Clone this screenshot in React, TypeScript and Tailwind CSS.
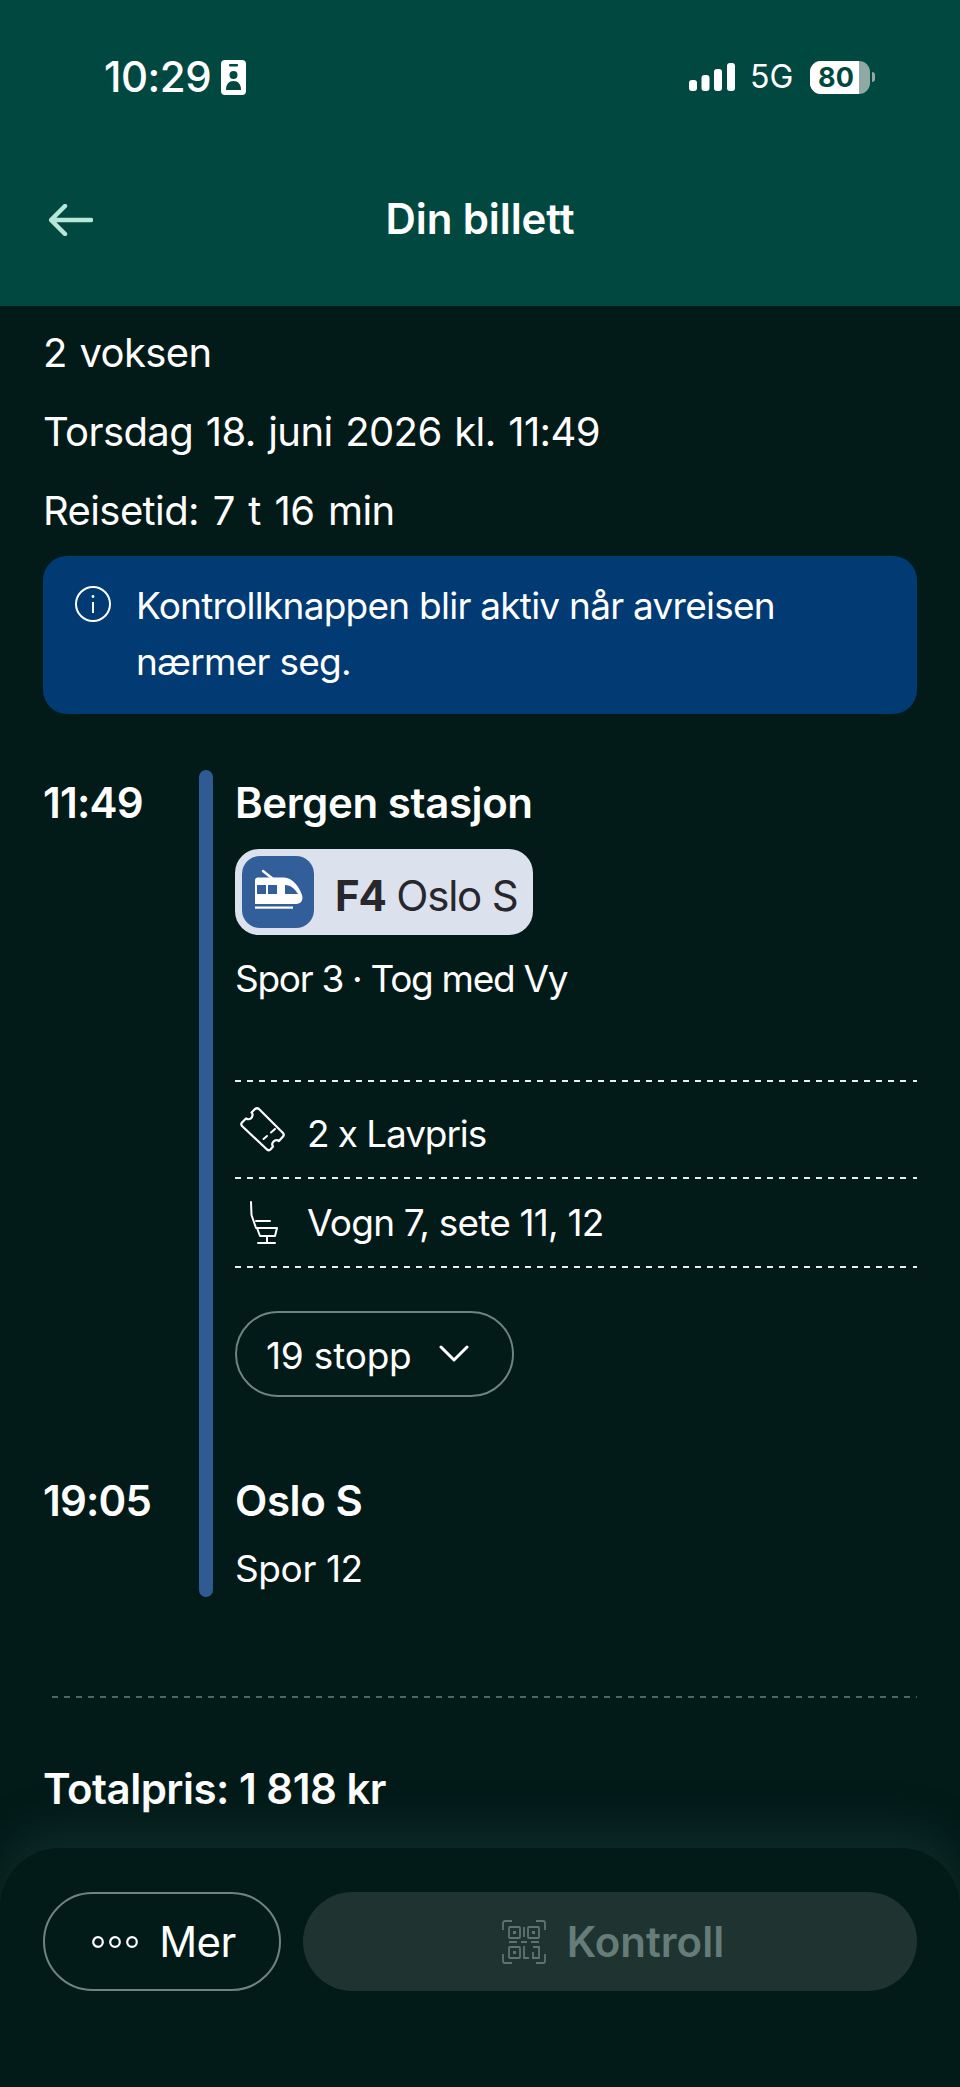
import React from "react";

const Dash = () => (
  <div className="h-[2px] w-full bg-[repeating-linear-gradient(90deg,#e8efed_0_6px,transparent_6px_12.1px)]" />
);

const Train = () => (
  <svg viewBox="0 0 72 72" className="h-[72px] w-[72px]" fill="none">
    <path d="M21 15 L31 23" stroke="#fff" strokeWidth="2.4" strokeLinecap="round" />
    <path fillRule="evenodd" clipRule="evenodd" fill="#fff" d="M16 21.5 H42 C50 21.5 57 30 60 39 C61.5 44 59 48 54 48 H13 V24.5 C13 22.5 14 21.5 16 21.5 Z M15 29 V38 H24 V29 Z M26 29 V38 H35 V29 Z M43 29 V38 H56 C53 33 49 29 43 29 Z" />
    <rect x="13" y="50.5" width="38" height="2.2" fill="#fff" />
  </svg>
);

const Ticket = () => (
  <svg viewBox="8 10 48 48" className="h-[48px] w-[48px] shrink-0" fill="none" stroke="#fff" strokeWidth="2.2" strokeLinejoin="round" strokeLinecap="round">
    <path d="M10 26.5 L14 22.5 C16.5 24 19 23 20 21 C21 19 20.5 17 19.5 16.5 L23 13 Q25 11.5 27 13 L51 37 Q52.5 39 51 40.5 L47 45 C45 43.5 43 44 41.5 45.5 C40 47 40 49 41 50.5 L38.5 53.5 Q37 55 35 53.5 L10 30 Q8.5 28 10 26.5 Z" />
    <path d="M31.5 43 L35 40 M39 36.5 L43 33" strokeWidth="2" />
  </svg>
);

const Seat = () => (
  <svg viewBox="0 0 50 56" className="h-[56px] w-[50px] shrink-0" fill="none" stroke="#fff" strokeWidth="2" strokeLinecap="round" strokeLinejoin="round">
    <path d="M11 7 L11.5 20 L16 33 H37 L35 41 H20 L17 33" />
    <path d="M16 26 H30" />
    <path d="M27 41 V48 M18 48 H35" />
  </svg>
);

const Qr = () => (
  <svg viewBox="0 0 44 44" className="h-[44px] w-[44px] shrink-0" fill="none" stroke="#5e7470" strokeWidth="1.8">
    <path d="M1 10 V3 C1 2 2 1 3 1 H10 M34 1 H41 C42 1 43 2 43 3 V10 M1 34 V41 C1 42 2 43 3 43 H10 M34 43 H41 C42 43 43 42 43 41 V34" />
    <rect x="7" y="7" width="11" height="11" rx="1" />
    <rect x="26" y="7" width="11" height="11" rx="1" />
    <rect x="7" y="27" width="11" height="11" rx="1" />
    <rect x="11" y="11" width="3" height="3" fill="#5e7470" stroke="none" />
    <rect x="30" y="11" width="3" height="3" fill="#5e7470" stroke="none" />
    <rect x="11" y="31" width="3" height="3" fill="#5e7470" stroke="none" />
    <path d="M22 7 V17 M7 22 H15 M19 22 H25 M29 22 H37 M22 26 V38 H27 M31 27 H37 V38 H31 V32" />
  </svg>
);

export default function App() {
  return (
    <div className="flex h-[2087px] w-[960px] flex-col overflow-hidden bg-[#021a18] font-['Inter',sans-serif] text-white">
      <header className="h-[306px] shrink-0 bg-[#014840] px-[49px]">
        <div className="flex h-[154px] items-center justify-between pl-[55px] pr-[36px]">
          <div className="flex items-center gap-[9px]">
            <span className="w-[108px] whitespace-nowrap text-[42px] font-medium leading-none tracking-[-0.5px]">10:29</span>
            <svg viewBox="0 0 25 35" className="h-[35px] w-[25px]">
              <rect width="25" height="35" rx="4" fill="#fff" />
              <rect x="8" y="4" width="9" height="2.5" rx="1" fill="#014840" />
              <circle cx="12.5" cy="15" r="4" fill="#014840" />
              <path d="M5 30 C5 24 8 21 12.5 21 C17 21 20 24 20 30 Z" fill="#014840" />
            </svg>
          </div>
          <div className="flex items-center">
            <svg viewBox="0 0 46 28" className="h-[28px] w-[46px]" fill="#fff">
              <rect x="0" y="17" width="8" height="11" rx="3" />
              <rect x="12.5" y="12" width="8" height="16" rx="3" />
              <rect x="25" y="6" width="8" height="22" rx="3" />
              <rect x="38" y="0" width="8" height="28" rx="3" />
            </svg>
            <span className="ml-[15px] w-[45px] text-[32px] font-normal leading-none">5G</span>
            <div className="ml-[15px] flex h-[33px] w-[60px] overflow-hidden rounded-[11px] bg-[#8fa9a4]">
              <div className="flex h-full w-[49px] items-center justify-center bg-white pl-[3px] text-[27px] font-bold leading-none text-[#014840]">80</div>
            </div>
            <div className="ml-[2px] h-[10px] w-[3px] rounded-r-full bg-[#8fa9a4]" />
          </div>
        </div>
        <div className="relative flex h-[130px] items-center justify-center">
          <svg viewBox="0 0 44 32" className="absolute left-0 top-[50px] h-[32px] w-[44px]" fill="none" stroke="#b5e8d8" strokeWidth="4.5" strokeLinecap="round" strokeLinejoin="round">
            <path d="M42 16 H3 M16 2 L2 16 L16 30" />
          </svg>
          <h1 className="text-[42px] font-semibold leading-none tracking-[-0.1px]">Din billett</h1>
        </div>
      </header>

      <main className="flex-1 px-[43px]">
        <p className="mt-[7px] text-[40px] leading-[79px] tracking-[-0.6px] [word-spacing:2px]">2 voksen</p>
        <p className="text-[40px] leading-[79px] tracking-[-0.6px] [word-spacing:2px]">Torsdag 18. juni 2026 kl. 11:49</p>
        <p className="text-[40px] leading-[79px] tracking-[-0.6px] [word-spacing:3px]">Reisetid: 7 t 16 min</p>

        <div className="mt-[6px] flex h-[158px] rounded-[24px] bg-[#023a74] pl-[32px] pr-[30px] pt-[22px]">
          <svg viewBox="0 0 36 36" className="mt-[8px] h-[36px] w-[36px] shrink-0" fill="none" stroke="#fff" strokeWidth="2">
            <circle cx="18" cy="18" r="17" />
            <path d="M18 16 V27" />
            <circle cx="18" cy="10.5" r="1.4" fill="#fff" stroke="none" />
          </svg>
          <p className="ml-[25px] text-[37px] leading-[56px] tracking-[-0.75px]">Kontrollknappen blir aktiv når avreisen nærmer seg.</p>
        </div>

        <div className="mt-[56px] grid grid-cols-[156px_14px_1fr]">
          <div className="text-[42px] font-semibold leading-[66px] tracking-[-0.8px]">11:49</div>
          <div className="row-span-4 rounded-full bg-[#2f5a94]" />
          <div className="pl-[22px]">
            <div className="text-[42px] font-semibold leading-[66px] tracking-[-0.4px]">Bergen stasjon</div>
            <div className="mt-[13px] flex h-[86px] w-[298px] items-center rounded-[24px] bg-[#dbe2ee] pl-[7px] text-[#27272c]">
              <div className="h-[72px] w-[72px] rounded-[18px] bg-[#325f99]"><Train /></div>
              <span className="ml-[21px] mt-[8px] whitespace-nowrap text-[42px] leading-none tracking-[-1.2px]"><b className="font-bold">F4</b> Oslo S</span>
            </div>
            <div className="text-[37px] leading-[88px] tracking-[-1.3px]">Spor 3 · Tog med Vy</div>
            <div className="mt-[57px]"><Dash /></div>
            <div className="flex h-[95px] items-center pl-[5px]">
              <Ticket />
              <span className="ml-[19px] mt-[9px] text-[37px] tracking-[-1.1px]">2 x Lavpris</span>
            </div>
            <Dash />
            <div className="flex h-[87px] items-center pl-[5px]">
              <Seat />
              <span className="ml-[17px] text-[37px] tracking-[-0.8px]">Vogn 7, sete 11, 12</span>
            </div>
            <Dash />
            <div className="mt-[43px] flex h-[86px] w-[279px] items-center rounded-full border-2 border-[#6f8480] pl-[29px]">
              <span className="mt-[2px] text-[37px] leading-none tracking-[-0.2px]">19 stopp</span>
              <svg viewBox="0 0 30 18" className="ml-[auto] mr-[43px] h-[18px] w-[30px]" fill="none" stroke="#fff" strokeWidth="3" strokeLinecap="round" strokeLinejoin="round">
                <path d="M2 2 L15 15 L28 2" />
              </svg>
            </div>
          </div>
          <div className="row-start-2 h-[71px]" />
          <div className="col-start-1 row-start-3 text-[42px] font-semibold leading-[66px] tracking-[-0.8px]">19:05</div>
          <div className="col-start-3 row-start-2 h-[71px]" />
          <div className="col-start-3 row-start-3 pl-[22px] text-[42px] font-semibold leading-[66px] tracking-[-0.4px]">Oslo S</div>
          <div className="col-start-3 row-start-4 h-[63px] pl-[22px] text-[37px] leading-[70px] tracking-[-0.4px]">Spor 12</div>
        </div>

        <div className="ml-[9px] mt-[99px] h-[2px] bg-[repeating-linear-gradient(90deg,#4f6763_0_6px,transparent_6px_12px)]" />
        <p className="mt-[58px] text-[42px] font-semibold leading-[66px] tracking-[-0.5px]">Totalpris: 1 818 kr</p>
      </main>

      <footer className="flex h-[239px] shrink-0 items-start gap-[22px] rounded-t-[60px] bg-[#021a18] px-[43px] pt-[44px] shadow-[0_-16px_50px_rgba(50,95,85,0.28)]">
        <button className="flex h-[99px] w-[238px] shrink-0 items-center justify-center rounded-full border-2 border-[#6f8480] pl-[3px]">
          <svg viewBox="0 0 48 14" className="h-[14px] w-[48px]" fill="none" stroke="#fff" strokeWidth="2.2">
            <circle cx="7" cy="7" r="4.8" />
            <circle cx="24" cy="7" r="4.8" />
            <circle cx="41" cy="7" r="4.8" />
          </svg>
          <span className="ml-[20px] text-[42px] leading-none tracking-[-0.6px]">Mer</span>
        </button>
        <button className="flex h-[99px] flex-1 items-center justify-center rounded-full bg-[#1f3331] pl-[6px]">
          <Qr />
          <span className="ml-[21px] text-[42px] font-semibold leading-none text-[#667c78]">Kontroll</span>
        </button>
      </footer>
    </div>
  );
}
